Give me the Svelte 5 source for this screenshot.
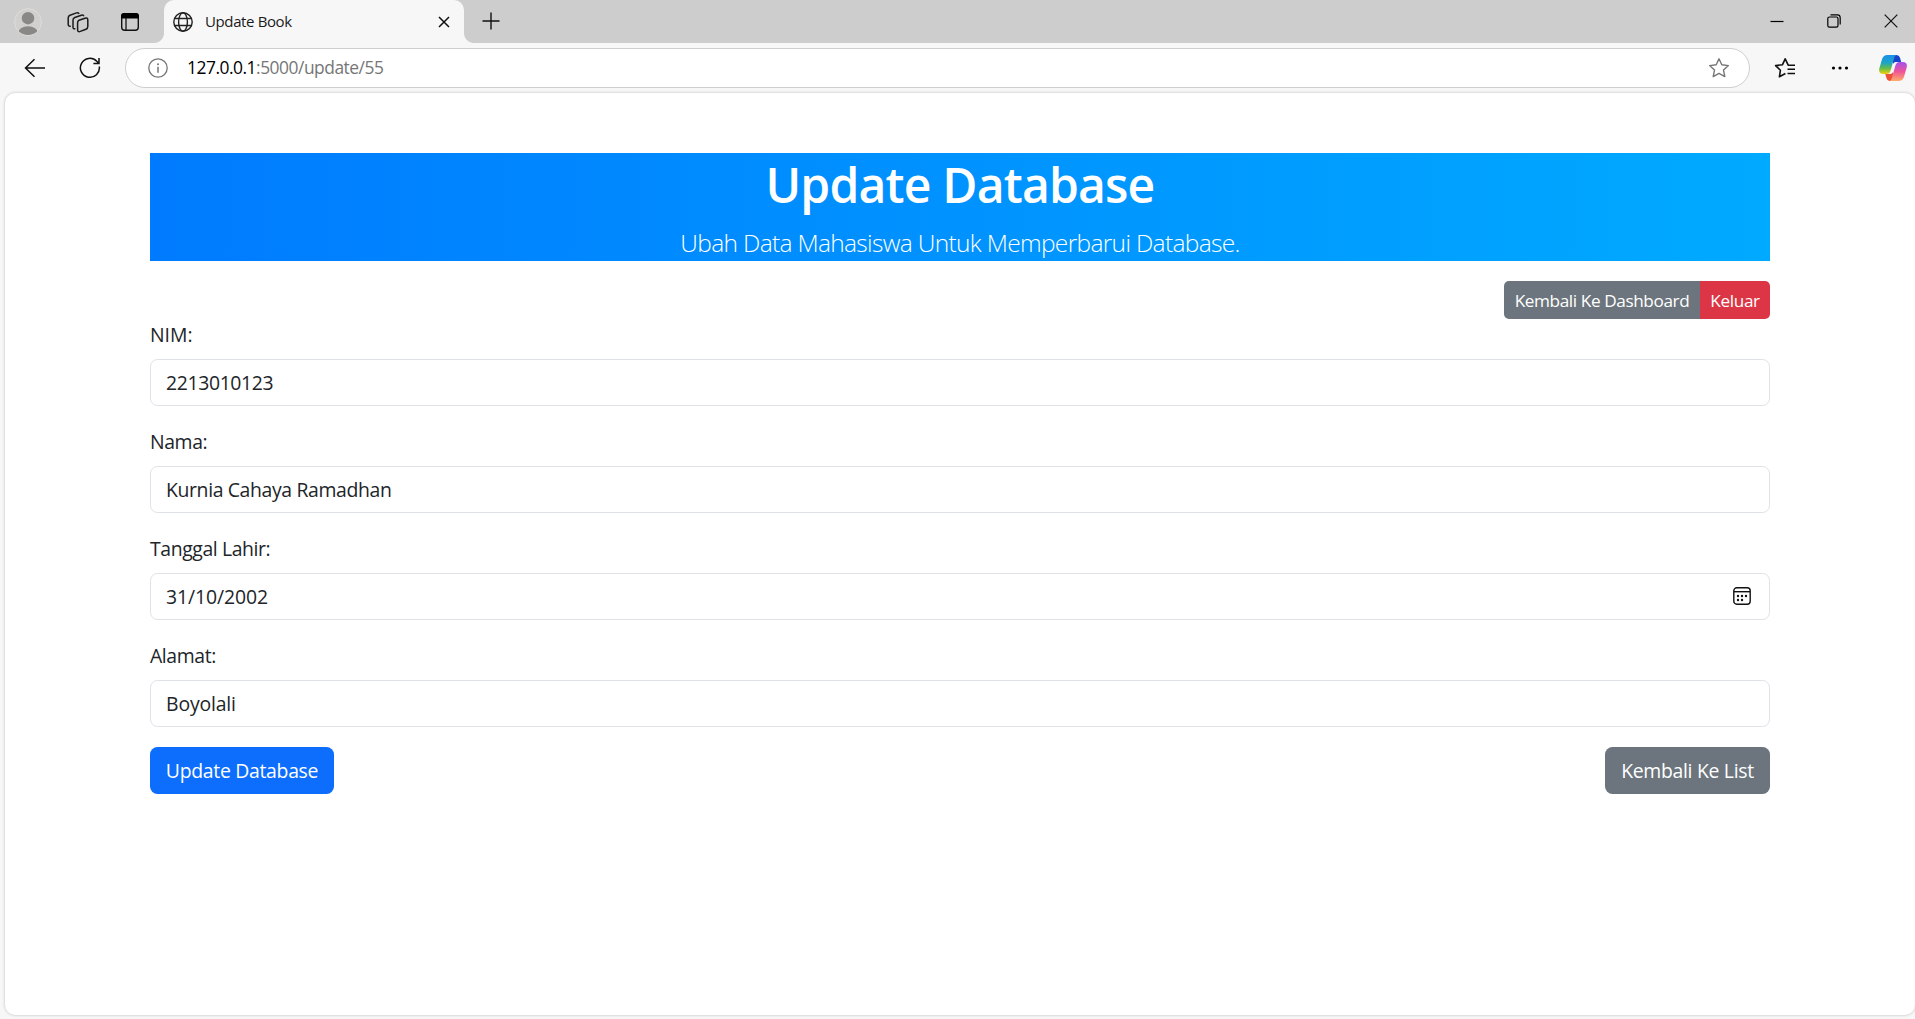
<script>
  let fields = $state([
    { id: 'nim', label: 'NIM:', value: '2213010123', kind: 'digits' },
    { id: 'nama', label: 'Nama:', value: 'Kurnia Cahaya Ramadhan', kind: 'name' },
    { id: 'lahir', label: 'Tanggal Lahir:', value: '31/10/2002', kind: 'date' },
    { id: 'alamat', label: 'Alamat:', value: 'Boyolali', kind: 'place' }
  ]);
</script>

<div class="browser">
  <header class="tabstrip">
    <div class="left-tools">
      <svg class="avatar" width="28" height="28" viewBox="0 0 28 28">
        <defs><clipPath id="face"><circle cx="14" cy="14" r="13" /></clipPath></defs>
        <circle cx="14" cy="14" r="13.4" fill="#d2d0ce" stroke="#dedcda" />
        <g clip-path="url(#face)" fill="#8a8886">
          <circle cx="14" cy="10.2" r="6.2" />
          <ellipse cx="14" cy="25" rx="10" ry="6.8" />
        </g>
      </svg>
      <svg class="spaces" width="22" height="22" viewBox="0 0 22 22" fill="none" stroke="#1b1b1b" stroke-width="1.5" stroke-linejoin="round" stroke-linecap="round">
        <path d="M12 9.300 18 7.200q2.800-.9 2.800 1.700v6.600q0 2-1.800 2.700l-5.700 2.200q-2.700.9-2.700-1.700v-7q0-1.800 1.400-2.400z" />
        <path d="M7.800 17.800Q6 18 6 15.900V9.200q0-2 1.800-2.700l6.500-2.300q1.700-.5 2.300.5" />
        <path d="M3.200 15.200q-2 .1-2-2V6.900q0-2 1.800-2.700l6.500-2.300q1.700-.5 2.300.5" />
      </svg>
      <svg class="vtabs" width="20" height="20" viewBox="0 0 20 20">
        <rect x="1.700" y="1.700" width="16.600" height="16.600" rx="3" fill="none" stroke="#111" stroke-width="1.400" />
        <path d="M1 6.500V4.200Q1 1 4.200 1h11.600Q19 1 19 4.200v2.300z" fill="#000" />
        <path d="M6 6v12" stroke="#111" stroke-width="1.300" />
      </svg>
    </div>
    <div class="tab">
      <svg width="20" height="20" viewBox="0 0 20 20" fill="none" stroke="#222" stroke-width="1.400">
        <circle cx="10" cy="10" r="9.200" /><ellipse cx="10" cy="10" rx="4.400" ry="9.200" /><path d="M1.700 6.500h16.600M1.700 13.500h16.600" />
      </svg>
      <span class="tab-title">Update Book</span>
      <svg class="tab-close" width="12" height="12" viewBox="0 0 12 12" stroke="#111" stroke-width="1.500"><path d="M1 1l10 10M11 1 1 11" /></svg>
    </div>
    <svg class="plus" width="18" height="18" viewBox="0 0 18 18" stroke="#111" stroke-width="1.400"><path d="M9 .5v17M.5 9h17" /></svg>
    <div class="window-buttons">
      <svg width="14" height="14" viewBox="0 0 14 14" stroke="#000" stroke-width="1.200"><path d="M.5 7.500h13" /></svg>
      <svg width="14" height="14" viewBox="0 0 14 14" fill="none" stroke="#000" stroke-width="1.200"><rect x=".8" y="3" width="10.200" height="10.200" rx="1.600" /><path d="M3.500 .9h6.900q2.800 0 2.800 2.800v6.800" /></svg>
      <svg width="14" height="14" viewBox="0 0 14 14" stroke="#111" stroke-width="1.200"><path d="M.7.7l12.600 12.600M13.300.7.7 13.300" /></svg>
    </div>
  </header>

  <nav class="toolbar">
    <svg class="back" width="22" height="20" viewBox="0 0 22 20" fill="none" stroke="#111" stroke-width="1.500"><path d="M21 10H1.500M10.500 1.200 1.500 10l9 8.800" /></svg>
    <svg class="reload" width="22" height="22" viewBox="0 0 22 22" fill="none" stroke="#111" stroke-width="1.500"><path d="M20.300 9.500A9.500 9.500 0 1 1 17.800 4.300L20 6.500M20 1v5.600h-5.600" /></svg>
    <div class="address">
      <svg width="20" height="20" viewBox="0 0 20 20" fill="none" stroke="#767676" stroke-width="1.300"><circle cx="10" cy="10" r="9.200" /><path d="M10 8.700v6" stroke-width="1.500" /><circle cx="10" cy="6.200" r="1" fill="#767676" stroke="none" /></svg>
      <span class="url"><b>127.0.0.1</b>:5000/update/55</span>
      <svg class="star" width="22" height="22" viewBox="0 0 22 22" fill="none" stroke="#767676" stroke-width="1.400" stroke-linejoin="round"><path d="m11 1.800 2.800 6 6.600.8-4.900 4.500 1.300 6.500-5.800-3.200-5.800 3.200 1.300-6.500L1.600 8.600l6.600-.8z" /></svg>
    </div>
    <svg class="favs" width="22" height="22" viewBox="0 0 22 22" fill="none" stroke="#111" stroke-width="1.600" stroke-linejoin="round"><path d="M21 8.200h-6.800L11.200 1.800l-2.800 6-6.800.8 4.800 4.700-1 6.500 6-3.300M13.500 12.300H21M13.500 16.500H21" /></svg>
    <svg class="more" width="18" height="4" viewBox="0 0 18 4"><circle cx="2.500" cy="2" r="1.600" /><circle cx="9" cy="2" r="1.600" /><circle cx="15.500" cy="2" r="1.600" /></svg>
    <svg class="copilot" width="28" height="26" viewBox="0 0 28 26">
      <defs>
        <linearGradient id="cl" x1="0" y1="0" x2="0" y2="1"><stop offset="0" stop-color="#1a8fe8" /><stop offset=".4" stop-color="#1ba4c9" /><stop offset=".7" stop-color="#63bd4a" /><stop offset="1" stop-color="#f2cf0c" /></linearGradient>
        <linearGradient id="cr" x1="0" y1="0" x2="0" y2="1"><stop offset="0" stop-color="#a452ee" /><stop offset=".5" stop-color="#ee5499" /><stop offset="1" stop-color="#ffad68" /></linearGradient>
      </defs>
      <path d="M14 0h3.500q2.700 0 3.500 2.800L22.200 7h-5.500q-2 0-2.700 2z" fill="#1745c9" />
      <path d="M14 26h-3.500q-2.200 0-3-2.800L6.300 19h5q2 0 2.700-2z" fill="#ee5035" />
      <path d="M8.500 0h9q-1.700.6-2.300 2.800l-3.600 12.700q-1 3.500-4.300 3.500H4.200Q-.8 19 .3 13.500L3 4.300Q4.300 0 8.500 0z" fill="url(#cl)" />
      <path d="M19.500 26h-9q1.700-.6 2.300-2.800l3.600-12.700q1-3.500 4.300-3.500h3.100q5 0 3.900 5.500L25 21.700Q23.700 26 19.500 26z" fill="url(#cr)" />
    </svg>
  </nav>

  <main class="page">
    <section class="banner">
      <h1>Update Database</h1>
      <p>Ubah Data Mahasiswa Untuk Memperbarui Database.</p>
    </section>
    <div class="group">
      <button class="sm grey">Kembali Ke Dashboard</button><button class="sm red">Keluar</button>
    </div>
    <form>
      {#each fields as field}
        <label class={field.id} for={field.id}>{field.label}</label>
        <div class="control">
          <input class={field.kind} id={field.id} type="text" bind:value={field.value} />
          {#if field.kind === 'date'}
            <svg width="18" height="18" viewBox="0 0 18 18" fill="none" stroke="#111" stroke-width="1.400"><rect x=".8" y=".8" width="16.400" height="16.400" rx="3" /><path d="M1 4.700h16" /><g fill="#111" stroke="none"><circle cx="5" cy="9" r="1.200" /><circle cx="9" cy="9" r="1.200" /><circle cx="13" cy="9" r="1.200" /><circle cx="5" cy="13" r="1.200" /><circle cx="9" cy="13" r="1.200" /></g></svg>
          {/if}
        </div>
      {/each}
      <div class="actions">
        <button type="button" class="lg blue">Update Database</button>
        <button type="button" class="lg grey">Kembali Ke List</button>
      </div>
    </form>
  </main>
</div>

<style>
  :global(body) { margin: 0; background: #f7f7f7; overflow: hidden; }
  .browser, .browser * { box-sizing: border-box; }
  .browser { width: 1915px; height: 1019px; display: flex; flex-direction: column; background: #f7f7f7; font-family: "Open Sans", "Noto Sans", sans-serif; color: #212529; overflow: hidden; }
  svg { display: block; flex: none; }
  button, input { font-family: inherit; margin: 0; }

  .tabstrip { height: 43px; flex: none; display: flex; background: #cdcdcd; }
  .left-tools { width: 164px; height: 43px; display: flex; align-items: center; padding-left: 14px; }
  .spaces { margin-left: 25px; }
  .vtabs { margin-left: 31px; }
  .tab { width: 300px; height: 43px; display: flex; align-items: center; padding: 1px 14px 0 9px; background: #f7f7f7; border-radius: 10px 10px 0 0; position: relative; }
  .tab::before, .tab::after { content: ""; position: absolute; bottom: 0; width: 10px; height: 10px; }
  .tab::before { left: -10px; background: radial-gradient(circle at 0 0, #cdcdcd 9.5px, #f7f7f7 10.5px); }
  .tab::after { right: -10px; background: radial-gradient(circle at 100% 0, #cdcdcd 9.5px, #f7f7f7 10.5px); }
  .tab-title { margin: -3px 0 0 12px; font-size: 15px; color: #1b1b1b; letter-spacing: -0.38px; white-space: nowrap; }
  .tab-close { margin-left: auto; }
  .plus { margin: 12px 0 0 18px; }
  .window-buttons { margin-left: auto; display: flex; gap: 43px; padding: 14px 17px 0 0; }

  .toolbar { height: 50px; flex: none; display: flex; align-items: center; padding-left: 24px; background: #f7f7f7; }
  .reload { margin-left: 33px; }
  .address { width: 1625px; height: 40px; margin-left: 24px; display: flex; align-items: center; padding: 0 19px 0 22px; border: 1px solid #cecece; border-radius: 20px; background: #fff; }
  .url { margin: -2px 0 0 19px; font-size: 17.4px; color: #767676; white-space: nowrap; letter-spacing: -0.48px; }
  .url b { color: #000; font-weight: 400; }
  .star { margin-left: auto; }
  .favs { margin-left: 24px; }
  .more { margin-left: 35px; }
  .copilot { margin-left: 30px; }

  .page { width: 1910px; height: 922px; margin-left: 5px; padding: 60px 145px 0; background: #fff; border-radius: 10px; box-shadow: 0 0 3px rgba(0, 0, 0, .25); }
  .banner { height: 108px; background: linear-gradient(90deg, #007bff, #00aaff); color: #fff; text-align: center; white-space: nowrap; }
  h1 { margin: 0; padding-top: 2px; height: 71px; font-size: 48px; line-height: 60px; font-weight: 600; letter-spacing: -0.8px; }
  p { margin: 0; font-size: 24.5px; line-height: 38px; font-weight: 300; letter-spacing: -0.67px; }
  .group { display: flex; justify-content: flex-end; margin-top: 20px; height: 38px; }
  button { border: 0; padding: 0; color: #fff; white-space: nowrap; }
  .sm { height: 38px; font-size: 17.2px; line-height: 39px; }
  .sm.grey { width: 196px; border-radius: 5px 0 0 5px; letter-spacing: -0.4px; }
  .sm.red { width: 70px; border-radius: 0 5px 5px 0; letter-spacing: -0.35px; }
  .grey { background: #6c757d; }
  .red { background: #dc3545; }
  .blue { background: #0d6efd; }
  form { display: flex; flex-direction: column; }
  label { height: 30px; margin-bottom: 10px; font-size: 19.4px; line-height: 32px; letter-spacing: -0.4px; }
  label.nim { letter-spacing: 0; }
  .control { height: 47px; margin-bottom: 20px; display: flex; align-items: center; padding: 0 18px 0 15px; border: 1px solid #dee2e6; border-radius: 7.5px; background: #fff; }
  .control svg { margin-top: -2px; }
  input { flex: 1; min-width: 0; height: 45px; padding: 0; border: 0; outline: 0; background: none; color: #212529; font-size: 19.4px; letter-spacing: -0.36px; }
  input.date { letter-spacing: -0.08px; }
  input.place { letter-spacing: -0.15px; }
  .actions { display: flex; justify-content: space-between; }
  .lg { height: 47px; font-size: 19.4px; letter-spacing: -0.3px; border-radius: 7.5px; }
  .lg.blue { width: 184px; }
  .lg.grey { width: 165px; }
</style>
